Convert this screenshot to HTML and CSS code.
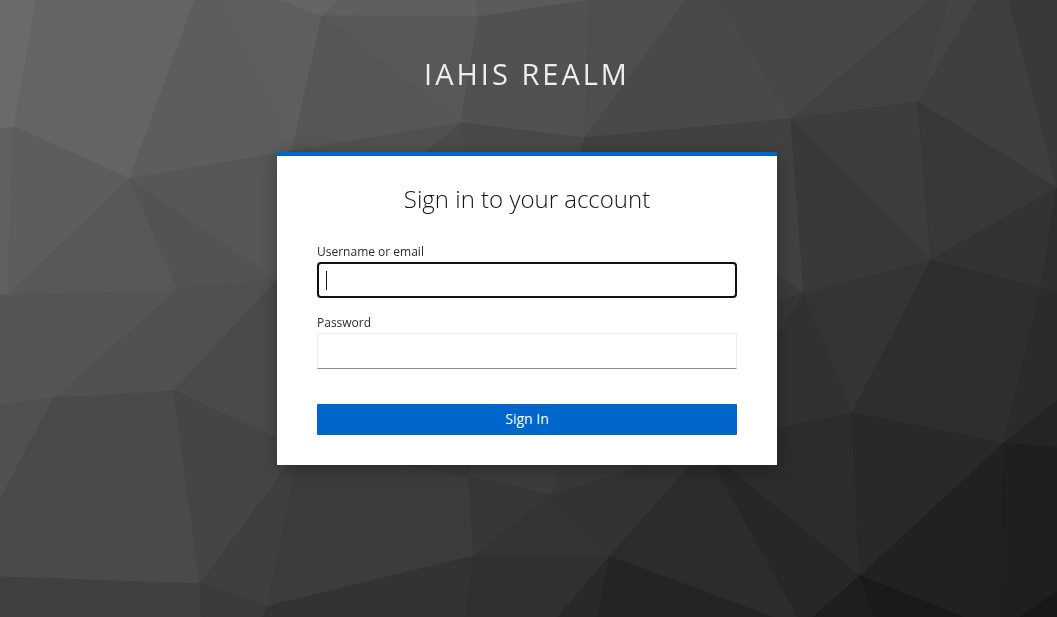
FILE: index.html
```html
<!DOCTYPE html>
<html lang="en">
<head>
<meta charset="utf-8">
<meta name="viewport" content="width=device-width, initial-scale=1">
<title>Sign in to IAHIS REALM</title>
<link rel="stylesheet" href="styles.css">
</head>
<body>
<svg class="backdrop" viewBox="0 0 1057 617" preserveAspectRatio="xMidYMid slice" aria-hidden="true">
  <path color="#6a6a6a" d="M0 0H37L14 127L0 129Z"/>
  <path color="#646464" d="M37 0H195L130 179L14 127Z"/>
  <path color="#5d5d5d" d="M195 0H220L292 151L130 179Z"/>
  <path color="#5e5e5e" d="M220 0H280L322 16L292 151Z"/>
  <path color="#656565" d="M280 0H338L322 16Z"/>
  <path color="#5f5f5f" d="M338 0H477L478 17L322 16Z"/>
  <path color="#5b5b5b" d="M477 0H590L478 17Z"/>
  <path color="#585858" d="M322 16L478 17L461 123Z"/>
  <path color="#565656" d="M322 16L461 123L292 151Z"/>
  <path color="#515151" d="M478 17L590 0L585 138L461 123Z"/>
  <path color="#4e4e4e" d="M590 0H686L585 138Z"/>
  <path color="#494949" d="M686 0H720L791 119L585 138Z"/>
  <path color="#474747" d="M720 0H931L791 119Z"/>
  <path color="#424242" d="M931 0H948L918 102L791 119Z"/>
  <path color="#444444" d="M948 0H977L918 102Z"/>
  <path color="#3f3f3f" d="M977 0H1009L1057 188L918 102Z"/>
  <path color="#393939" d="M1009 0H1057V188Z"/>
  <path color="#606060" d="M0 129L14 127L8 295H0Z"/>
  <path color="#5d5d5d" d="M14 127L130 179L8 295Z"/>
  <path color="#585858" d="M130 179L8 295L178 290Z"/>
  <path color="#535353" d="M130 179L178 290L277 280Z"/>
  <path color="#575757" d="M130 179L292 151V290L277 280Z"/>
  <path color="#505050" d="M292 151L461 123L425 153H292Z"/>
  <path color="#4a4a4a" d="M461 123L425 153H466Z"/>
  <path color="#484848" d="M461 123L585 138L580 153H466Z"/>
  <path color="#404040" d="M585 138L791 119L610 153H580Z"/>
  <path color="#414141" d="M585 138L791 119L804 294L760 270V152H600Z"/>
  <path color="#3d3d3d" d="M791 119L918 102L931 260Z"/>
  <path color="#383838" d="M918 102L1057 188L931 260Z"/>
  <path color="#393939" d="M791 119L931 260L804 294Z"/>
  <path color="#333333" d="M931 260L1057 188L1041 289Z"/>
  <path color="#2e2e2e" d="M1057 188L1041 289L1057 293Z"/>
  <path color="#3b3b3b" d="M760 260L804 294L760 305Z"/>
  <path color="#363636" d="M760 305L804 294L778 334L760 350Z"/>
  <path color="#313131" d="M804 294L852 413L760 433V350L778 334Z"/>
  <path color="#343434" d="M804 294L931 260L852 413Z"/>
  <path color="#2e2e2e" d="M931 260L1041 289L1004 443L852 413Z"/>
  <path color="#2b2b2b" d="M1041 289L1057 293V401L1004 443Z"/>
  <path color="#242424" d="M1057 401V448L1004 443Z"/>
  <path color="#555555" d="M0 295H8L178 290L54 398L0 406Z"/>
  <path color="#515151" d="M178 290L174 391L54 398Z"/>
  <path color="#505050" d="M178 290L277 280L174 391Z"/>
  <path color="#4a4a4a" d="M277 280H300V449L174 391Z"/>
  <path color="#505050" d="M0 406L54 398L0 500Z"/>
  <path color="#4a4a4a" d="M54 398L174 391L200 584L0 577V500Z"/>
  <path color="#454545" d="M174 391L300 449L200 584Z"/>
  <path color="#404040" d="M0 577L200 584L201 617H0Z"/>
  <path color="#3f3f3f" d="M200 584L300 449L268 606Z"/>
  <path color="#3b3b3b" d="M200 584L268 606L262 617H201Z"/>
  <path color="#3c3c3c" d="M300 449H400L469 477L474 556L268 606Z"/>
  <path color="#333333" d="M262 617L268 606L474 556L466 617Z"/>
  <path color="#383838" d="M380 460H472L469 477Z"/>
  <path color="#3c3c3c" d="M469 477L475 455H564L552 495Z"/>
  <path color="#383838" d="M564 455H680L552 495Z"/>
  <path color="#373737" d="M469 477L552 495L474 556Z"/>
  <path color="#343434" d="M552 495L610 556H474Z"/>
  <path color="#333333" d="M552 495L680 455H700L610 556Z"/>
  <path color="#303030" d="M474 556H610L558 617H466Z"/>
  <path color="#292929" d="M610 556L598 617H558Z"/>
  <path color="#242424" d="M610 556L775 617H598Z"/>
  <path color="#2c2c2c" d="M610 556L700 455H714L798 617H775Z"/>
  <path color="#2c2c2c" d="M700 440L760 433L852 413L860 576L720 480Z"/>
  <path color="#272727" d="M706 450L860 576L813 617H798Z"/>
  <path color="#292929" d="M852 413L1004 443L860 576Z"/>
  <path color="#212121" d="M1004 443L860 576L963 617H1001Z"/>
  <path color="#1f1f1f" d="M1004 443L1057 448V592L1020 617H1001Z"/>
  <path color="#181818" d="M1057 592V617H1020Z"/>
  <path color="#1e1e1e" d="M860 576L876 617H813Z"/>
  <path color="#1a1a1a" d="M860 576L963 617H876Z"/>
</svg>
<div class="page">
  <header class="realm">IAHIS REALM</header>
  <main class="card">
    <h1 class="card-title">Sign in to your account</h1>
    <form class="login-form">
      <div class="field">
        <label class="label" for="username">Username or email</label>
        <input class="input" id="username" name="username" type="text" autocomplete="off" autofocus>
      </div>
      <div class="field">
        <label class="label" for="password">Password</label>
        <input class="input" id="password" name="password" type="password" autocomplete="off">
      </div>
      <button class="submit" type="submit">Sign In</button>
    </form>
  </main>
</div>
</body>
</html>
```
FILE: styles.css
```css
* {
  box-sizing: border-box;
}

body {
  margin: 0;
  background: #393939;
  color: #151515;
  font-family: "Open Sans", "Noto Sans", sans-serif;
}

.backdrop {
  position: fixed;
  inset: 0;
  z-index: -1;
  width: 100%;
  height: 100%;
}

.backdrop path {
  fill: currentColor;
  stroke: currentColor;
  stroke-width: 1px;
}

.page {
  display: flex;
  flex-direction: column;
  align-items: center;
  padding: 55px 3px 32px 0;
}

.realm {
  margin-bottom: 59px;
  color: #ededed;
  font-size: 29px;
  line-height: 38px;
  letter-spacing: 3px;
}

.card {
  width: 100%;
  max-width: 500px;
  padding: 27px 40px 30px;
  border-top: 4px solid #0066cc;
  background: #ffffff;
  box-shadow: 0 4px 16px rgba(3, 3, 3, 0.3);
}

.card-title {
  margin: 0 0 29px;
  font-size: 24px;
  font-weight: 300;
  line-height: 31px;
  text-align: center;
}

.login-form {
  display: flex;
  flex-direction: column;
}

.field {
  display: flex;
  flex-direction: column;
  margin-bottom: 16px;
}

.label {
  padding-bottom: 1px;
  color: #2b2b2b;
  font-size: 12px;
  line-height: 18px;
}

.input {
  width: 100%;
  height: 36px;
  padding: 5px 8px;
  border: 1px solid #ededed;
  border-bottom-color: #8a8d90;
  border-radius: 0;
  background: #ffffff;
  color: #151515;
  font: inherit;
  font-size: 14px;
}

.input:focus {
  border: 2px solid #101010;
  border-radius: 4px;
  outline: none;
}

#username:focus:not(:valid),
#username:focus {
  background: linear-gradient(#151515, #151515) 7px 7px / 1px 19px no-repeat #ffffff;
  caret-color: transparent;
}

.submit {
  margin-top: 19px;
  padding: 4px 16px 6px;
  border: 0;
  border-radius: 1px;
  background: #0066cc;
  color: #ffffff;
  font: inherit;
  font-size: 14px;
  line-height: 21px;
}
```
